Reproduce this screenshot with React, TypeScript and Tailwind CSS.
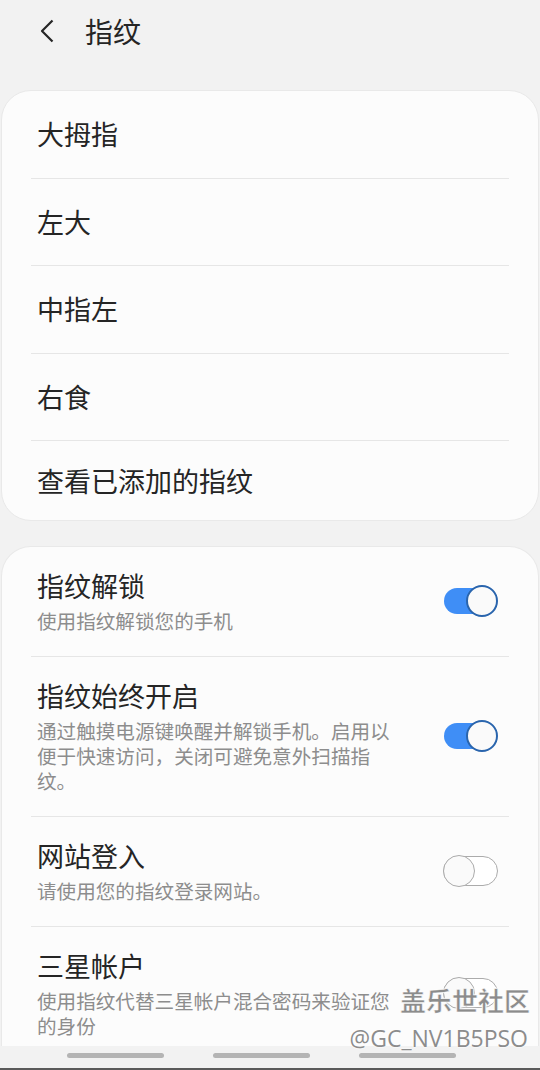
import React from 'react';

const fingerprints = ['大拇指', '左大', '中指左', '右食'];

const settings = [
  { title: '指纹解锁', desc: '使用指纹解锁您的手机', on: true },
  { title: '指纹始终开启', desc: '通过触摸电源键唤醒并解锁手机。启用以便于快速访问，关闭可避免意外扫描指纹。', on: true },
  { title: '网站登入', desc: '请使用您的指纹登录网站。', on: false },
  { title: '三星帐户', desc: '使用指纹代替三星帐户混合密码来验证您的身份', on: false },
];

const Toggle: React.FC<{ on: boolean }> = ({ on }) =>
  on ? (
    <div className="relative w-[54px] h-[32px] shrink-0">
      <div className="absolute left-0 top-[3px] h-[26px] w-[48px] rounded-full bg-[#3f8ef6]" />
      <div className="absolute right-0 top-0 size-[32px] rounded-full bg-[#fafafa] border-2 border-[#2a65ad]" />
    </div>
  ) : (
    <div className="relative w-[55px] h-[32px] shrink-0">
      <div className="absolute left-0 top-[1px] h-[30px] w-[55px] rounded-full bg-white border-[1.5px] border-[#ababab]" />
      <div className="absolute left-0 top-0 size-[32px] rounded-full bg-[#fafafa] border-[1.5px] border-[#ababab]" />
    </div>
  );

export default function App() {
  return (
    <div
      className="relative w-[540px] h-[1070px] bg-[#f2f2f2] overflow-hidden flex flex-col text-[#252525]"
      style={{ fontFamily: '"Noto Sans CJK SC", "Noto Sans", sans-serif' }}
    >
      {/* Header */}
      <div className="h-[61px] shrink-0 flex items-center pl-[40px]">
        <svg width="14" height="24" viewBox="0 0 14 24" fill="none">
          <polyline points="12.5,1.5 2,12 12.5,22.5" stroke="#262626" strokeWidth="2.2" strokeLinejoin="round" />
        </svg>
        <h1 className="ml-[31px] text-[28px] leading-[36px]">指纹</h1>
      </div>

      {/* Fingerprint list */}
      <div className="mt-[29px] mx-[1px] rounded-[30px] bg-[#fcfcfc] border border-[#e9e9e9] px-[29px] shrink-0">
        {fingerprints.map((name, i) => (
          <div
            key={name}
            className={`${i % 2 === 0 ? 'h-[88px]' : 'h-[87px]'} flex items-center pl-[6px] border-b border-[#e6e6e6] text-[27px]`}
          >
            {name}
          </div>
        ))}
        <div className="h-[79px] flex items-center pl-[6px] pt-[2px] text-[27px]">查看已添加的指纹</div>
      </div>

      {/* Settings */}
      <div className="mt-[25px] mx-[1px] rounded-t-[30px] bg-[#fcfcfc] border border-b-0 border-[#e9e9e9] px-[29px] flex-1 min-h-0 overflow-hidden">
        {settings.map((s, i) => (
          <div
            key={s.title}
            className={`flex items-center justify-between pl-[6px] pr-[11px] pt-[21px] pb-[23px] ${
              i < settings.length - 1 ? 'border-b border-[#e6e6e6]' : ''
            }`}
          >
            <div className="w-[366px]">
              <div className="text-[27px] leading-[36px]">{s.title}</div>
              <div className="mt-[4px] text-[19.6px] leading-[25px] text-[#8d8d8d]">{s.desc}</div>
            </div>
            <Toggle on={s.on} />
          </div>
        ))}
      </div>

      {/* Navigation bar */}
      <div className="h-[24px] shrink-0 bg-[#f2f2f2] flex items-center gap-[49px] pl-[67px] pb-[3px] border-b-2 border-[#5a5a5a]">
        <div className="w-[97px] h-[5px] rounded-full bg-[#b4b4b4]" />
        <div className="w-[97px] h-[5px] rounded-full bg-[#b4b4b4]" />
        <div className="w-[97px] h-[5px] rounded-full bg-[#b4b4b4]" />
      </div>

      {/* Watermark */}
      <div
        className="absolute right-[10px] top-[984px] text-[26px] leading-[32px] text-[#8c8c8c] font-bold"
        style={{ WebkitTextStroke: '0.5px #fff', textShadow: '0 0 2px #fff, 0 0 2px #fff' }}
      >
        盖乐世社区
      </div>
      <div
        className="absolute right-[12px] top-[1023px] text-[23px] leading-[30px] text-[#8c8c8c]"
        style={{ fontFamily: '"Open Sans", sans-serif', textShadow: '0 0 2px #fff, 0 0 2px #fff' }}
      >
        @GC_NV1B5PSO
      </div>
    </div>
  );
}
